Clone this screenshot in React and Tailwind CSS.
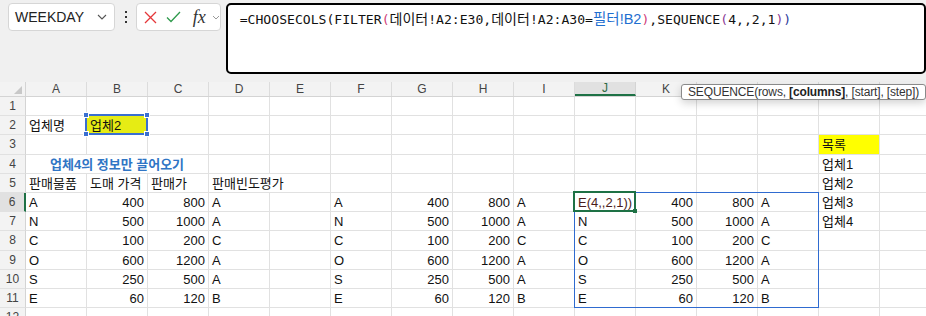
import React from "react";

const COLS = ["A", "B", "C", "D", "E", "F", "G", "H", "I", "J", "K", "L", "M", "N", "O"];
const ITEMS = [
  ["A", 400, 800, "A"],
  ["N", 500, 1000, "A"],
  ["C", 100, 200, "C"],
  ["O", 600, 1200, "A"],
  ["S", 250, 500, "A"],
  ["E", 60, 120, "B"],
];
const SPAN = { 1: "", 2: "col-span-2", 3: "col-span-3" };

// sheet contents keyed by "row-col"
const cells = {};
const put = (r, c, text, extra = {}) => {
  cells[`${r}-${c}`] = { text, ...extra };
};

put(2, 0, "업체명");
put(2, 1, "업체2", { bg: "bg-[#e6ec14]" });
put(4, 0, "업체4의 정보만 끌어오기", { span: 3, cls: "pl-[24px] font-bold", color: "text-[#2f75c5]" });
put(5, 0, "판매물품");
put(5, 1, "도매 가격");
put(5, 2, "판매가");
put(5, 3, "판매빈도평가", { span: 2 });
ITEMS.forEach((it, i) => {
  [0, 5, 9].forEach((start) => {
    it.forEach((v, k) => put(6 + i, start + k, v, { right: typeof v === "number" }));
  });
});
put(6, 9, "E(4,,2,1))", { color: "text-[#4a1c1c]" });
put(3, 13, "목록", { bg: "bg-[#ffff00]" });
put(4, 13, "업체1");
put(5, 13, "업체2");
put(6, 13, "업체3");
put(7, 13, "업체4");

const SheetRow = ({ r }) => {
  const out = [];
  const active = r === 6;
  out.push(
    <div
      key="h"
      className={`flex items-center justify-center border-b border-[#e1e1e1] text-[12px] text-[#444] ${
        active ? "bg-[#e1e1e1] border-r-2 border-r-[#1e7145]" : "bg-[#f3f3f3] border-r border-r-[#d4d4d4]"
      }`}
    >
      {r}
    </div>
  );
  for (let c = 0; c < COLS.length; c++) {
    const cell = cells[`${r}-${c}`];
    const span = cell?.span || 1;
    out.push(
      <div
        key={c}
        className={`border-r border-b border-[#e1e1e1] overflow-hidden whitespace-nowrap leading-[19px] text-[13px] ${
          cell?.color || "text-[#111]"
        } ${SPAN[span]} ${cell?.bg || "bg-white"} ${cell?.right ? "text-right pr-[3px]" : "pl-[3px]"} ${
          cell?.cls || ""
        }`}
      >
        {cell ? cell.text : ""}
      </div>
    );
    c += span - 1;
  }
  return out;
};

const Handle = ({ className }) => (
  <div className={`absolute w-[6px] h-[6px] bg-[#3a6fd0] border border-white ${className}`} />
);

export default function App() {
  return (
    <div
      className="relative w-[926px] h-[316px] overflow-hidden bg-[#f0f0f0]"
      style={{ fontFamily: '"Liberation Sans", "Noto Sans CJK KR", sans-serif' }}
    >
      {/* formula bar */}
      <div className="flex items-start h-[82px] pt-[3px] pl-[8px]">
        <div className="flex items-center justify-between w-[110px] h-[28px] bg-white border border-[#d6d6d6] rounded-[4px] pl-[6px] pr-[6px]">
          <span className="text-[14px] text-[#222]">WEEKDAY</span>
          <svg width="10" height="6" viewBox="0 0 10 6" className="mr-[1px]">
            <path d="M1 1l4 4 4-4" fill="none" stroke="#555" strokeWidth="1.1" />
          </svg>
        </div>
        <div className="flex flex-col items-center justify-center gap-[3px] w-[21px] h-[28px]">
          <div className="w-[2px] h-[2px] bg-[#333]" />
          <div className="w-[2px] h-[2px] bg-[#333]" />
          <div className="w-[2px] h-[2px] bg-[#333]" />
        </div>
        <div className="flex items-center w-[85px] h-[28px] bg-white border border-[#d6d6d6] rounded-[4px]">
          <svg width="13" height="13" viewBox="0 0 13 13" className="ml-[7px]">
            <path d="M1 1l11 11M12 1L1 12" stroke="#e5373a" strokeWidth="1.3" />
          </svg>
          <svg width="15" height="12" viewBox="0 0 15 12" className="ml-[9px]">
            <path d="M1 6.5l4 4L14 1" fill="none" stroke="#2e9a4c" strokeWidth="1.3" />
          </svg>
          <span
            className="ml-[12px] text-[18px] italic text-[#333] leading-none"
            style={{ fontFamily: '"Liberation Serif", serif' }}
          >
            fx
          </span>
          <svg width="8" height="5" viewBox="0 0 8 5" className="ml-[6px]">
            <path d="M1 1l3 3 3-3" fill="none" stroke="#9a9a9a" strokeWidth="1" />
          </svg>
        </div>
        <div className="ml-[5px] w-[720px] h-[71px] bg-white border-2 border-black rounded-[5px] pl-[12px] pt-[5px]">
          <div
            className="text-[13.1px] leading-[18px] text-[#111] whitespace-nowrap"
            style={{ fontFamily: '"DejaVu Sans Mono", "Noto Sans CJK KR", monospace' }}
          >
            =CHOOSECOLS(FILTER<span className="text-[#d0407a]">(</span>
            <span className="text-[14px]">데이터</span>!A2:E30,<span className="text-[14px]">데이터</span>!A2:A30=
            <span
              className="text-[#1f6fd0] text-[14.5px]"
              style={{ fontFamily: '"Liberation Sans", "Noto Sans CJK KR", sans-serif' }}
            >
              필터!B2
            </span>
            <span className="text-[#d0407a]">)</span>,SEQUENCE<span className="text-[#8a3a95]">(</span>4,,2,1
            <span className="text-[#8a3a95]">)</span>
            <span className="text-[#2b3a9a]">)</span>
          </div>
        </div>
      </div>

      {/* column headers */}
      <div className="grid grid-cols-[26px_repeat(15,61px)] h-[15px] bg-[#f3f3f3] border-b border-[#d4d4d4]">
        <div className="relative border-r border-[#d4d4d4]">
          <svg width="8" height="8" viewBox="0 0 8 8" className="absolute right-[3px] bottom-[2px]">
            <path d="M8 0V8H0z" fill="#c8c8c8" />
          </svg>
        </div>
        {COLS.map((c) => (
          <div
            key={c}
            className={`flex items-center justify-center text-[12px] leading-none ${
              c === "J"
                ? "bg-[#e1e1e1] text-[#2d6b44] border-b-2 border-[#1e7145] border-r border-r-[#d4d4d4]"
                : "text-[#444] border-r border-[#dcdcdc]"
            }`}
          >
            {c}
          </div>
        ))}
      </div>

      {/* sheet body */}
      <div className="relative">
        <div className="grid grid-cols-[26px_repeat(15,61px)] auto-rows-[19.2px]">
          {Array.from({ length: 12 }, (_, i) => (
            <SheetRow key={i} r={i + 1} />
          ))}
        </div>

        {/* B2 reference highlight */}
        <div className="absolute left-[85px] top-[17.2px] w-[63px] h-[21.2px] border-2 border-[#3a6fd0]">
          <Handle className="-left-[4px] -top-[4px]" />
          <Handle className="-right-[4px] -top-[4px]" />
          <Handle className="-left-[4px] -bottom-[4px]" />
          <Handle className="-right-[4px] -bottom-[4px]" />
        </div>

        {/* spill range J6:M11 */}
        <div className="absolute left-[574px] top-[95px] w-[245px] h-[116.2px] border border-[#2f6bd0]" />

        {/* active cell J6 */}
        <div className="absolute left-[573px] top-[94px] w-[63px] h-[21.2px] border-2 border-[#1e7145]">
          <div className="absolute -right-[3px] -bottom-[3px] w-[4px] h-[4px] bg-[#1e7145]" />
        </div>
      </div>

      {/* function tooltip */}
      <div className="absolute left-[681px] top-[84px] h-[16px] px-[6px] flex items-center bg-white border border-[#8a8a8a] rounded-[3px] shadow-[0_3px_8px_rgba(0,0,0,0.18)] text-[12px] text-[#333] whitespace-nowrap tracking-[-0.15px]">
        SEQUENCE(rows,&nbsp;<b className="font-bold text-[#222]">[columns]</b>, [start], [step])
      </div>
    </div>
  );
}
